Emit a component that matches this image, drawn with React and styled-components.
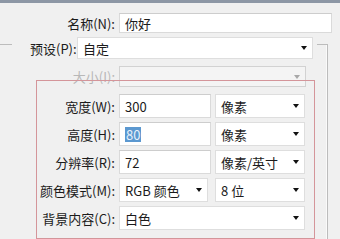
import React from 'react';
import styled, { createGlobalStyle } from 'styled-components';

const GlobalStyle = createGlobalStyle`
  html, body {
    margin: 0;
    padding: 0;
    background: #f0f0f0;
  }
  body {
    font-family: "Noto Sans CJK SC", "Noto Sans", sans-serif;
    font-size: 13px;
    color: #1b1b1b;
  }
`;

const Dialog = styled.div`
  position: relative;
  width: 340px;
  height: 239px;
  box-sizing: border-box;
  overflow: hidden;
  background: #f0f0f0;
  border-top: 3px solid #8d97a5;
`;

const Row = styled.div`
  display: flex;
  align-items: center;
  gap: 4px;
  height: ${(p) => p.h || 24}px;
  margin-top: ${(p) => p.mt || 0}px;
`;

const Label = styled.label`
  width: ${(p) => p.w || 115}px;
  flex: none;
  text-align: right;
  white-space: nowrap;
  line-height: 1;
  color: ${(p) => (p.disabled ? '#b8b8b8' : '#1b1b1b')};
`;

const Field = styled.div`
  box-sizing: border-box;
  flex: none;
  width: ${(p) => p.w}px;
  height: 100%;
  margin-left: ${(p) => p.ml || 0}px;
  display: flex;
  align-items: center;
  padding-left: 5px;
  background: #fff;
  border: 1px solid #dadada;
  border-top-color: #cdcdcd;
  white-space: nowrap;
  line-height: 1;
`;

const Select = styled(Field)`
  justify-content: space-between;
  padding-right: 5px;
  background: ${(p) => (p.disabled ? '#f4f4f4' : '#fff')};
  border-color: ${(p) => (p.disabled ? '#d2d2d2' : '#dedede')};
`;

const Arrow = styled.span`
  width: 0;
  height: 0;
  border-left: 3.5px solid transparent;
  border-right: 3.5px solid transparent;
  border-top: 4px solid ${(p) => (p.disabled ? '#a8a8a8' : '#111')};
`;

const Selected = styled.span`
  background: #5b98d0;
  color: #e6f0fb;
  padding: 1px 1px;
`;

const Group = styled.div`
  box-sizing: border-box;
  margin-top: 11px;
  margin-left: -20px;
  width: 348px;
  height: 200px;
  border: 1px solid #bcbcbc;
  border-bottom: none;
  box-shadow: inset -1px 0 0 #fafafa;
`;

const Legend = styled.div`
  display: flex;
  align-items: center;
  gap: 3px;
  width: fit-content;
  height: 22px;
  margin-top: -8px;
  margin-left: 31px;
  padding: 0 4px 0 18px;
  background: #f0f0f0;
`;

const Rows = styled.div`
  margin-left: 19px;
  display: flex;
  flex-direction: column;
`;

const Box = styled.div`
  display: flex;
  flex-direction: column;
  gap: 4px;
  margin-top: 7px;
`;

const Mark = styled.div`
  position: absolute;
  left: 36px;
  top: 77px;
  width: 277px;
  height: 157px;
  border: 1.5px solid #d4959a;
  pointer-events: none;
`;

const Drop = ({ w, ml, children, disabled }) => (
  <Select w={w} ml={ml} disabled={disabled}>
    <span>{children}</span>
    <Arrow disabled={disabled} />
  </Select>
);

export default function App() {
  return (
    <>
      <GlobalStyle />
      <Dialog>
        <Row h={20} mt={10}>
          <Label>名称(N):</Label>
          <Field w={213}>你好</Field>
        </Row>
        <Group>
          <Legend>
            <Label w={44}>预设(P):</Label>
            <Drop w={236}>自定</Drop>
          </Legend>
          <Rows>
            <Row h={21} mt={7}>
              <Label disabled>大小(I):</Label>
              <Drop w={187} disabled />
            </Row>
            <Box>
              <Row>
                <Label>宽度(W):</Label>
                <Field w={92}>300</Field>
                <Drop w={90}>像素</Drop>
              </Row>
              <Row>
                <Label>高度(H):</Label>
                <Field w={92}><Selected>80</Selected></Field>
                <Drop w={90}>像素</Drop>
              </Row>
              <Row>
                <Label>分辨率(R):</Label>
                <Field w={92}>72</Field>
                <Drop w={90}>像素/英寸</Drop>
              </Row>
              <Row>
                <Label>颜色模式(M):</Label>
                <Drop w={89}>RGB 颜色</Drop>
                <Drop w={90} ml={3}>8 位</Drop>
              </Row>
              <Row>
                <Label>背景内容(C):</Label>
                <Drop w={186}>白色</Drop>
              </Row>
            </Box>
          </Rows>
        </Group>
        <Mark />
      </Dialog>
    </>
  );
}
